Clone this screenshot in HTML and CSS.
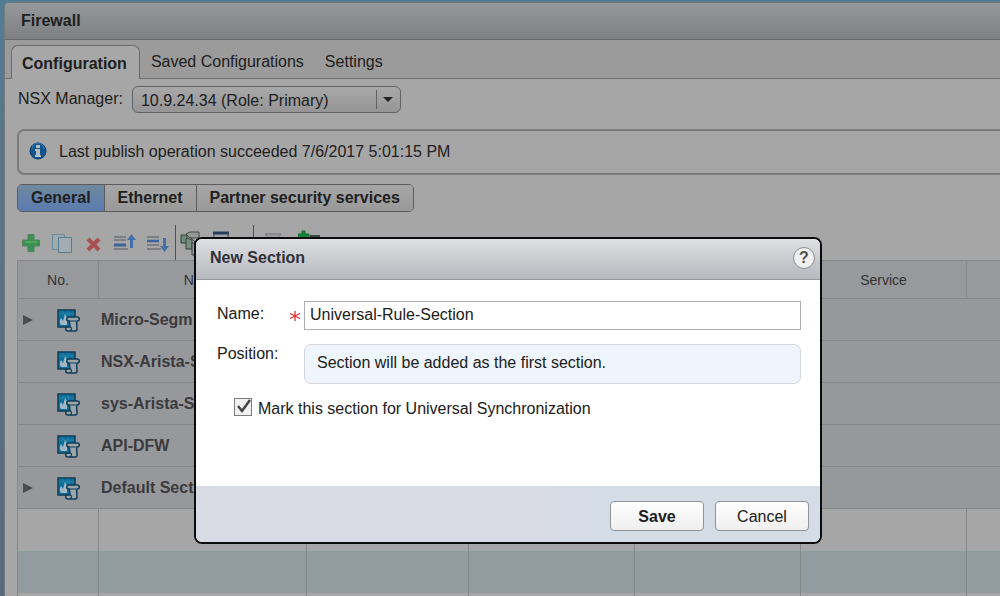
FILE: index.html
```
<!DOCTYPE html>
<html lang="en">
<head>
    <meta charset="UTF-8">
    <meta name="viewport" content="width=device-width, initial-scale=1.0">
    <title>Firewall</title>
    <link rel="stylesheet" href="styles.css">
</head>
<body>
    <!-- shared symbol for the section rows -->
    <svg width="0" height="0" class="defs" aria-hidden="true">
        <symbol id="section-icon" viewBox="0 0 24 24">
            <rect x="2" y="2" width="17" height="17" fill="#0c6f9c" stroke="#123c55" stroke-width="1.5"/>
            <path d="M3 6h15M7 3v3M12 3v5" stroke="#2a82a8" stroke-width="1"/>
            <path d="M5 17c-2-3-1-5 0-7l2 3 2-7c2 3 2 5 2 7v4z" fill="#a3b6c1"/>
            <path d="M13 9h8c3 0 3 4 0 4-1 3 0 5 0 8 0 1-1 2-2 2h-7c-3 0-3-4 0-4h2c0-2 0-4-1-6-3 0-3-4 0-4z" fill="#9ba5ac" stroke="#123c55" stroke-width="1.5"/>
            <path d="M13 13h7M14 19c2 0 2 3 0 4" fill="none" stroke="#123c55" stroke-width="1.2"/>
        </symbol>
    </svg>

    <main class="panel">
        <h1 class="panel-title">Firewall</h1>

        <nav class="tabs">
            <a href="#" class="tab active">Configuration</a>
            <a href="#" class="tab">Saved Configurations</a>
            <a href="#" class="tab">Settings</a>
        </nav>

        <div class="content">
            <div class="manager">
                <label for="manager">NSX Manager:</label>
                <div class="select-box">
                    <select id="manager">
                        <option>10.9.24.34 (Role: Primary)</option>
                    </select>
                </div>
            </div>

            <div class="notice">
                <svg width="18" height="18" viewBox="0 0 18 18" aria-hidden="true">
                    <circle cx="9" cy="9" r="8" fill="#12558d" stroke="#0b3f6e"/>
                    <path d="M3 7a6 6 0 0 1 12 0" fill="none" stroke="#3f7fb0" stroke-width="1"/>
                    <path d="M7 3h4v3H7zM6 7h5v6h1v2H6v-2h1V9H6z" fill="#b3bdc6"/>
                </svg>
                <span>Last publish operation succeeded 7/6/2017 5:01:15 PM</span>
            </div>

            <div class="button-bar">
                <button type="button" class="selected">General</button>
                <button type="button">Ethernet</button>
                <button type="button">Partner security services</button>
            </div>

            <div class="toolbar">
                <div class="tools edit-tools">
                    <button type="button" aria-label="Add">
                        <svg width="20" height="20" viewBox="0 0 20 20"><path d="M7 1.500h6V7h5.500v6H13v5.500H7V13H1.500V7H7z" fill="#3c9350" stroke="#55805e" stroke-linejoin="round"/><path d="M4 9h12" stroke="#52a463" stroke-width="2"/></svg>
                    </button>
                    <button type="button" aria-label="Copy">
                        <svg width="20" height="20" viewBox="0 0 20 20"><path d="M.5 1.500h12v15H.5z" fill="#a0a9ac" stroke="#678c9b"/><path d="M6.500 4.500h13v15h-13z" fill="#a3acb2" stroke="#527f93"/></svg>
                    </button>
                    <button type="button" aria-label="Delete">
                        <svg width="20" height="20" viewBox="0 0 20 20"><path d="M5 6l11 11M16 6L5 17" stroke="#a85052" stroke-width="4"/></svg>
                    </button>
                    <button type="button" aria-label="Move up">
                        <svg width="22" height="20" viewBox="0 0 22 20"><path d="M0 4h12M0 7h12M0 16h14" stroke="#6e7378" stroke-width="1.500"/><path d="M0 12h12" stroke="#3d659b" stroke-width="3"/><path d="M17.500 15V4" stroke="#4570a8" stroke-width="3"/><path d="M13 7l4.500-6L22 7z" fill="#4570a8"/></svg>
                    </button>
                    <button type="button" aria-label="Move down">
                        <svg width="22" height="20" viewBox="0 0 22 20"><path d="M0 4h12M0 12h12M0 16h14" stroke="#6e7378" stroke-width="1.500"/><path d="M0 8h12" stroke="#3d659b" stroke-width="2.500"/><path d="M17.500 5v9" stroke="#4570a8" stroke-width="3"/><path d="M13 13l4.500 6 4.500-6z" fill="#4570a8"/></svg>
                    </button>
                </div>
                <div class="tools section-tools">
                    <button type="button" aria-label="Merge sections">
                        <svg width="22" height="26" viewBox="0 0 22 26"><path d="M6 4l4-2h9v6H10z" fill="#969a98" stroke="#454b49"/><path d="M1 5h6v8H1z" fill="#6e8a7a" stroke="#37413c"/><path d="M7 8l5 2v9H6V9z" fill="#78917f" stroke="#37413c"/><path d="M12 13h6l3 4v8h-9z" fill="#9a9e9b" stroke="#37413c"/><path d="M10 7l9 9" stroke="#454b49"/></svg>
                    </button>
                    <button type="button" aria-label="Columns">
                        <svg width="16" height="26" viewBox="0 0 16 26"><path d="M1 3h14v20H1z" fill="#a2a5a9" stroke="#39444f"/><path d="M0 3h16" stroke="#263d5c" stroke-width="3"/></svg>
                    </button>
                </div>
                <div class="tools filter-tools">
                    <button type="button" aria-label="Filter">
                        <svg width="18" height="26" viewBox="0 0 18 26"><path d="M1 4h16l-7 8v8H8v-8z" fill="#999c9b" stroke="#757777"/></svg>
                    </button>
                    <button type="button" aria-label="Add section">
                        <svg width="22" height="26" viewBox="0 0 22 26"><path d="M4 1h3v3h4v5H7v4H4V9H0V4h4z" fill="#0d8730" stroke="#176a2e"/><path d="M12 6h10" stroke="#3c4540" stroke-width="2"/></svg>
                    </button>
                </div>
            </div>

            <table class="rules">
                <colgroup>
                    <col class="col-no">
                    <col class="col-name">
                    <col class="col-rule">
                    <col class="col-source">
                    <col class="col-dest">
                    <col class="col-service">
                    <col>
                </colgroup>
                <thead>
                    <tr>
                        <th>No.</th>
                        <th>Name</th>
                        <th></th>
                        <th></th>
                        <th></th>
                        <th>Service</th>
                        <th></th>
                    </tr>
                </thead>
                <tbody>
                    <tr class="section">
                        <td colspan="7"><div class="row"><span class="arrow"></span><svg class="icon"><use href="#section-icon"/></svg>Micro-Segm</div></td>
                    </tr>
                    <tr class="section">
                        <td colspan="7"><div class="row"><span class="no-arrow"></span><svg class="icon"><use href="#section-icon"/></svg>NSX-Arista-S</div></td>
                    </tr>
                    <tr class="section">
                        <td colspan="7"><div class="row"><span class="no-arrow"></span><svg class="icon"><use href="#section-icon"/></svg>sys-Arista-SD</div></td>
                    </tr>
                    <tr class="section">
                        <td colspan="7"><div class="row"><span class="no-arrow"></span><svg class="icon"><use href="#section-icon"/></svg>API-DFW</div></td>
                    </tr>
                    <tr class="section">
                        <td colspan="7"><div class="row"><span class="arrow"></span><svg class="icon"><use href="#section-icon"/></svg>Default Sect</div></td>
                    </tr>
                    <tr class="empty"><td></td><td></td><td></td><td></td><td></td><td></td><td></td></tr>
                    <tr class="empty alt"><td></td><td></td><td></td><td></td><td></td><td></td><td></td></tr>
                    <tr class="empty"><td></td><td></td><td></td><td></td><td></td><td></td><td></td></tr>
                </tbody>
            </table>
        </div>
    </main>

    <div class="overlay">
        <form class="dialog" role="dialog" aria-labelledby="dialog-title">
            <div class="dialog-header">
                <h2 id="dialog-title">New Section</h2>
                <button type="button" class="help" aria-label="Help">?</button>
            </div>
            <div class="dialog-body">
                <div class="field">
                    <label for="name">Name:</label>
                    <svg class="required" width="12" height="12" viewBox="0 0 12 12" aria-hidden="true"><path d="M6 1v10M1 3.500l10 5M11 3.500l-10 5" stroke="#e03030" stroke-width="1.300"/></svg>
                    <input type="text" id="name" value="Universal-Rule-Section" required>
                </div>
                <div class="field">
                    <span class="label">Position:</span>
                    <p class="position">Section will be added as the first section.</p>
                </div>
                <label class="check">
                    <input type="checkbox" checked>
                    <span>Mark this section for Universal Synchronization</span>
                </label>
            </div>
            <div class="dialog-footer">
                <button type="submit" class="primary">Save</button>
                <button type="button">Cancel</button>
            </div>
        </form>
    </div>
</body>
</html>
```
FILE: styles.css
```
* {
    box-sizing: border-box;
}

body {
    margin: 0;
    height: 100vh;
    overflow: hidden;
    padding: 2px 0 0 4px;
    background: linear-gradient(#527c93, #5c7489 30%, #566a7d);
    font-family: "Liberation Sans", Arial, sans-serif;
    font-size: 16px;
    line-height: 20px;
    color: #202020;
}

button,
input,
select {
    font: inherit;
    color: inherit;
}

.defs {
    position: absolute;
}

.panel {
    height: 100%;
    background: #a6a6a6;
    border-left: 1px solid #747a7e;
    border-top-left-radius: 6px;
    overflow: hidden;
}

.panel-title {
    margin: 0;
    padding: 8px 16px;
    font-size: 16px;
    background: linear-gradient(#96989a, #7d7f83);
    border-top: 1px solid #6f777c;
    border-bottom: 1px solid #67696b;
}

.tabs {
    display: flex;
    align-items: flex-end;
    height: 39px;
    padding-left: 6px;
    background: #9b9b9b;
    border-bottom: 1px solid #707070;
}

.tab {
    padding: 0 10px 6px 11px;
    color: #202020;
    text-decoration: none;
}

.tab.active {
    margin-bottom: -1px;
    padding: 8px 12px 5px 10px;
    font-weight: bold;
    background: #a7a7a7;
    border: 1px solid #6b6b6b;
    border-bottom: 0;
    border-radius: 7px 7px 0 0;
}

.content {
    padding: 7px 0 0 12px;
}

.manager {
    display: flex;
    gap: 9px;
}

.manager label {
    padding-top: 3px;
    padding-left: 1px;
}

.select-box {
    position: relative;
}

.select-box select {
    appearance: none;
    width: 269px;
    height: 27px;
    padding: 2px 30px 0 8px;
    border: 1px solid #636363;
    border-radius: 6px;
    background: linear-gradient(#a8a8a8, #969696);
}

.select-box::before {
    content: "";
    position: absolute;
    right: 24px;
    top: 4px;
    bottom: 4px;
    width: 1px;
    background: #606060;
    pointer-events: none;
}

.select-box::after {
    content: "";
    position: absolute;
    right: 8px;
    top: 11px;
    border: 5px solid transparent;
    border-top-color: #222;
    border-bottom: 0;
    pointer-events: none;
}

.notice {
    display: flex;
    align-items: center;
    gap: 12px;
    height: 46px;
    margin-top: 16px;
    padding: 0 10px;
    border: 2px solid #7a7a7a;
    border-right: 0;
    border-radius: 7px 0 0 7px;
}

.notice svg {
    margin-bottom: 3px;
}

.button-bar {
    display: inline-flex;
    margin-top: 9px;
    border: 1px solid #5c5c5c;
    border-radius: 5px;
    overflow: hidden;
    vertical-align: top;
}

.button-bar button {
    height: 26px;
    padding: 0 13px;
    border: 0;
    border-left: 1px solid #5c5c5c;
    background: linear-gradient(#a6a6a6, #999);
    font-weight: bold;
}

.button-bar button:first-child {
    border-left: 0;
}

.button-bar button.selected {
    background: linear-gradient(#70899f, #5a7bb0);
}

.toolbar {
    display: flex;
    height: 35px;
    margin-top: 13px;
    padding-left: 4px;
}

.tools {
    display: flex;
    align-items: center;
    gap: 11px;
}

.tools button {
    display: flex;
    padding: 0;
    border: 0;
    background: none;
}

.edit-tools {
    padding-right: 6px;
}

.section-tools {
    padding: 0 24px 0 4px;
    border-left: 1px solid #505050;
}

.filter-tools {
    gap: 16px;
    padding-left: 10px;
    border-left: 1px solid #505050;
}

.rules {
    width: 100%;
    table-layout: fixed;
    border-collapse: collapse;
    border-left: 1px solid #888;
}

.col-no {
    width: 81px;
}

.col-name {
    width: 208px;
}

.col-rule {
    width: 162px;
}

.col-source,
.col-dest,
.col-service {
    width: 166px;
}

.rules th {
    height: 38px;
    padding: 0;
    background: #97999d;
    border: 1px solid #87888a;
    font-size: 14px;
    font-weight: normal;
    color: #333;
}

.rules td {
    height: 42px;
    padding: 0;
    border: 1px solid #858688;
}

.rules th:last-child,
.rules td:last-child {
    border-right: 0;
}

.section {
    background: #96989c;
    font-weight: bold;
    color: #3c3a3c;
}

.row {
    display: flex;
    align-items: center;
    padding-left: 5px;
}

.arrow,
.no-arrow {
    width: 10px;
    margin-right: 23px;
}

.arrow {
    border: 5px solid transparent;
    border-left: 10px solid #4a4d4d;
    border-right: 0;
}

.icon {
    width: 24px;
    height: 24px;
    margin-right: 21px;
}

.rules .empty td {
    border-top: 0;
    border-bottom: 0;
}

.empty.alt {
    background: #929b9f;
}

.overlay {
    position: absolute;
    inset: 0;
    display: flex;
    justify-content: center;
    align-items: flex-start;
    padding: 237px 0 0 16px;
}

.dialog {
    width: 628px;
    background: #fff;
    border: 2px solid #0c0c0e;
    border-radius: 8px;
    overflow: hidden;
}

.dialog-header {
    display: flex;
    align-items: center;
    justify-content: space-between;
    height: 41px;
    padding: 0 5px 2px 14px;
    background: linear-gradient(#dfe0e4, #b7b9be);
    border-bottom: 1px solid #98999d;
}

.dialog-header h2 {
    margin: 0;
    font-size: 16px;
    color: #303238;
}

.help {
    width: 22px;
    height: 22px;
    padding: 0;
    border: 1px solid #8b8b8b;
    border-radius: 50%;
    background: #f0f0f0;
    font-weight: bold;
    line-height: 18px;
    color: #505050;
}

.dialog-body {
    display: flex;
    flex-direction: column;
    gap: 14px;
    height: 206px;
    padding: 21px 19px 0 21px;
}

.field {
    display: flex;
    align-items: flex-start;
}

.field label,
.field .label {
    width: 72px;
    padding-top: 3px;
}

.field .label {
    width: 87px;
    padding-top: 0;
}

.required {
    margin: 9px 3px 0 0;
}

.field input {
    flex: 1;
    height: 29px;
    padding: 0 5px 1px;
    border: 1px solid #a9afaf;
    background: #fff;
}

.position {
    flex: 1;
    margin: 0;
    padding: 8px 12px 10px;
    background: #eff5fc;
    border: 1px solid #d3d8dd;
    border-radius: 7px;
}

.check {
    display: flex;
    align-items: center;
    gap: 6px;
    padding-left: 17px;
}

.check input {
    appearance: none;
    width: 18px;
    height: 18px;
    margin: 0 0 4px;
    border: 1px solid #7c7c7c;
    background: #f1f1f1;
}

.check input:checked {
    background: #f1f1f1 url("data:image/svg+xml,%3Csvg xmlns='http://www.w3.org/2000/svg' viewBox='0 0 16 16'%3E%3Cpath d='M3 7l4 5 8-11' fill='none' stroke='%23444' stroke-width='2.5'/%3E%3C/svg%3E") center no-repeat;
}

.dialog-footer {
    display: flex;
    justify-content: flex-end;
    gap: 11px;
    padding: 15px 11px 11px;
    background: linear-gradient(to right, #d8dbe4 55%, #d4dde6 65%);
}

.dialog-footer button {
    width: 94px;
    height: 30px;
    padding: 1px 0 0;
    border: 1px solid #929497;
    border-radius: 4px;
    background: linear-gradient(#fff, #efefef);
}

.dialog-footer .primary {
    font-weight: bold;
}
```
